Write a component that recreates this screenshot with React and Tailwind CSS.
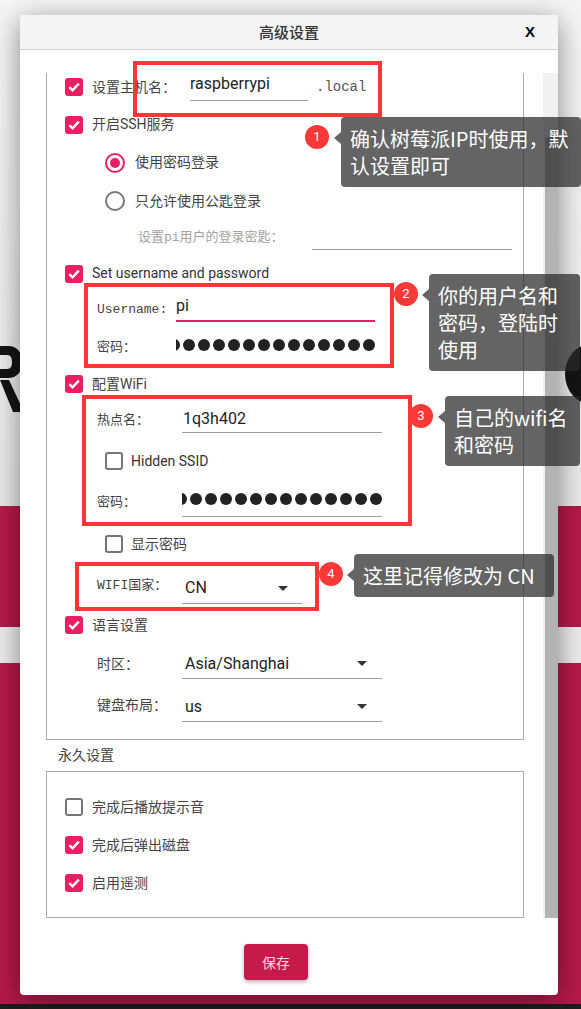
import React from "react";

function Check({ checked }) {
  return checked ? (
    <span className="flex h-[18px] w-[18px] shrink-0 items-center justify-center rounded-[3px] bg-[#e91e63]">
      <svg width="14" height="14" viewBox="0 0 14 14">
        <path d="M2.3 7.2 L5.6 10.4 L11.8 3.6" fill="none" stroke="white" strokeWidth="2.4" />
      </svg>
    </span>
  ) : (
    <span className="h-[18px] w-[18px] shrink-0 rounded-[3px] border-2 border-[#767676] bg-white" />
  );
}

function Radio({ checked }) {
  return checked ? (
    <span className="flex h-[20px] w-[20px] shrink-0 items-center justify-center rounded-full border-2 border-[#e91e63]">
      <span className="h-[10px] w-[10px] rounded-full bg-[#e91e63]" />
    </span>
  ) : (
    <span className="h-[20px] w-[20px] shrink-0 rounded-full border-2 border-[#767676]" />
  );
}

function Dots() {
  return (
    <div className="flex items-center justify-end gap-[3px] overflow-hidden">
      {Array.from({ length: 14 }).map((_, i) => (
        <span key={i} className="h-[12px] w-[12px] shrink-0 rounded-full bg-[#222]" />
      ))}
    </div>
  );
}

function Arrow() {
  return <span className="h-0 w-0 border-x-[5px] border-t-[5px] border-x-transparent border-t-[#333]" />;
}

const sans = "font-['Roboto','Noto_Sans_CJK_SC',sans-serif] text-[14px] text-[#444]";
const mono = "font-['Liberation_Mono','Noto_Sans_CJK_SC',monospace] text-[13px] text-[#444]";

function Tip({ cls, children }) {
  return (
    <div
      className={`absolute whitespace-nowrap rounded-[4px] bg-[rgba(40,40,40,0.72)] px-[9px] py-[8px] font-['Noto_Sans_CJK_SC',sans-serif] text-[20px] leading-[27px] text-white ${cls}`}
    >
      <span className="absolute left-[-7px] top-[15px] h-0 w-0 border-y-[6px] border-r-[7px] border-y-transparent border-r-[rgba(40,40,40,0.72)]" />
      {children}
    </div>
  );
}

function Badge({ cls, n }) {
  return (
    <div
      className={`absolute flex h-[24px] w-[24px] items-center justify-center rounded-full bg-[#f93838] font-['Roboto',sans-serif] text-[13px] text-white ${cls}`}
    >
      {n}
    </div>
  );
}

export default function App() {
  return (
    <div className="relative h-[1009px] w-[581px] overflow-hidden font-['Roboto','Noto_Sans_CJK_SC',sans-serif]">
      {/* background app (dimmed) */}
      <div className="relative h-[506px] bg-linear-to-b from-[#f5f5f5] to-[#e9e9e9]">
        <svg className="absolute left-0 top-[340px]" width="30" height="80" viewBox="0 0 30 80">
          <path
            d="M0 6 H8 C17 6 22 12 22 22 C22 32 17 38 8 38 H0 V29 H7 C11 29 12 26 12 22 C12 18 11 15 7 15 H0 Z"
            fill="#141414"
          />
          <path d="M0 40 H9 L24 72 H13 Z" fill="#141414" />
        </svg>
        <svg className="absolute right-0 top-[340px]" width="30" height="80" viewBox="0 0 30 80">
          <ellipse cx="40" cy="34" rx="26" ry="30" fill="#141414" />
        </svg>
      </div>
      <div className="h-[121px] bg-[#b5194a]" />
      <div className="h-[36px] bg-[#ececec]" />
      <div className="h-[341px] bg-[#b5194a]" />
      <div className="h-[5px] bg-[#1e1e1e]" />

      {/* dialog */}
      <div className="absolute left-[20px] top-[15px] flex h-[980px] w-[538px] flex-col rounded-b-[4px] bg-white shadow-[0_6px_28px_rgba(0,0,0,0.45)]">
        <div className="grid h-[35px] shrink-0 grid-cols-[1fr_auto_1fr] items-center border-b border-[#cfcfcf] bg-[#f5f5f5]">
          <span />
          <span className="font-['Noto_Sans_CJK_SC',sans-serif] text-[15px] font-medium text-[#333]">高级设置</span>
          <span className="justify-self-end pr-[23px] font-['Liberation_Sans',sans-serif] text-[15px] font-bold text-black">X</span>
        </div>

        <div className="pl-[26px] pt-[23px]">
          <div className="flex h-[845px] overflow-hidden">
            <div className="w-[478px] shrink-0 overflow-hidden">
              <div className="mt-[-5px]">
                {/* fieldset 1 */}
                <div className="border-x border-b border-[#ababab] pb-[13px] pl-[18px]">
                  <div className="flex h-[38px] items-center">
                    <Check checked />
                    <span className={`ml-[9px] w-[98px] ${sans}`}>设置主机名：</span>
                    <div className="flex h-[28px] w-[118px] items-center border-b border-[#9e9e9e] pb-[6px] text-[16px] text-[#222]">
                      raspberrypi
                    </div>
                    <span className={`ml-[8px] ${mono} text-[14px] text-[#555]`}>.local</span>
                  </div>
                  <div className="flex h-[37px] items-center">
                    <Check checked />
                    <span className={`ml-[9px] ${sans}`}>开启SSH服务</span>
                  </div>
                  <div className="ml-[40px] flex h-[39px] items-center">
                    <Radio checked />
                    <span className={`ml-[10px] ${sans}`}>使用密码登录</span>
                  </div>
                  <div className="ml-[40px] flex h-[38px] items-center">
                    <Radio />
                    <span className={`ml-[10px] ${sans}`}>只允许使用公匙登录</span>
                  </div>
                  <div className="ml-[73px] flex h-[36px] items-center">
                    <span className={`w-[174px] ${mono} text-[#a3a3a3]`}>设置pi用户的登录密匙：</span>
                    <div className="h-[24px] w-[200px] border-b border-[#9e9e9e]" />
                  </div>
                  <div className="flex h-[35px] items-center">
                    <Check checked />
                    <span className="ml-[9px] text-[14px] text-[#333]">Set username and password</span>
                  </div>
                  <div className="ml-[32px] flex h-[38px] items-center">
                    <span className={`w-[79px] ${mono}`}>Username:</span>
                    <div className="flex h-[24px] w-[199px] items-center border-b-2 border-[#e91e63] pb-[6px] text-[16px] text-[#222]">
                      pi
                    </div>
                  </div>
                  <div className="ml-[32px] flex h-[37px] items-center">
                    <span className={`w-[79px] ${mono}`}>密码：</span>
                    <div className="flex h-[32px] w-[199px] flex-col justify-center pb-[6px]">
                      <Dots />
                    </div>
                  </div>
                  <div className="flex h-[36px] items-center">
                    <Check checked />
                    <span className={`ml-[9px] ${sans}`}>配置WiFi</span>
                  </div>
                  <div className="ml-[32px] flex h-[38px] items-center">
                    <span className={`w-[85px] ${mono}`}>热点名：</span>
                    <div className="flex h-[24px] w-[200px] items-center border-b border-[#9e9e9e] pb-[4px] pl-[1px] text-[16px] text-[#222]">
                      1q3h402
                    </div>
                  </div>
                  <div className="ml-[40px] flex h-[42px] items-center">
                    <Check />
                    <span className="ml-[8px] text-[14px] text-[#333]">Hidden SSID</span>
                  </div>
                  <div className="ml-[32px] flex h-[41px] items-center">
                    <span className={`w-[85px] ${mono}`}>密码：</span>
                    <div className="flex h-[28px] w-[200px] flex-col justify-center border-b border-[#9e9e9e] pb-[6px]">
                      <Dots />
                    </div>
                  </div>
                  <div className="ml-[40px] flex h-[42px] items-center">
                    <Check />
                    <span className={`ml-[8px] ${sans}`}>显示密码</span>
                  </div>
                  <div className="ml-[32px] flex h-[41px] items-center">
                    <span className={`w-[85px] ${mono}`}>WIFI国家：</span>
                    <div className="mt-[6px] flex h-[30px] w-[120px] items-center justify-between border-b border-[#9e9e9e] pl-[3px] pr-[14px] text-[16px] text-[#222]">
                      <span>CN</span>
                      <Arrow />
                    </div>
                  </div>
                  <div className="flex h-[38px] items-center">
                    <Check checked />
                    <span className={`ml-[9px] ${sans}`}>语言设置</span>
                  </div>
                  <div className="ml-[32px] flex h-[40px] items-center">
                    <span className={`w-[85px] ${sans}`}>时区：</span>
                    <div className="flex h-[30px] w-[200px] items-center justify-between border-b border-[#9e9e9e] pl-[3px] pr-[15px] text-[16px] text-[#222]">
                      <span>Asia/Shanghai</span>
                      <Arrow />
                    </div>
                  </div>
                  <div className="ml-[32px] flex h-[42px] items-center">
                    <span className={`w-[85px] ${sans}`}>键盘布局：</span>
                    <div className="mt-[4px] flex h-[30px] w-[200px] items-center justify-between border-b border-[#9e9e9e] pl-[3px] pr-[15px] text-[16px] text-[#222]">
                      <span>us</span>
                      <Arrow />
                    </div>
                  </div>
                </div>

                <div className={`flex h-[31px] items-center pl-[12px] ${sans}`}>永久设置</div>

                {/* fieldset 2 */}
                <div className="border border-[#ababab] pb-[15px] pl-[18px] pt-[16px]">
                  <div className="flex h-[38px] items-center">
                    <Check />
                    <span className={`ml-[9px] ${sans}`}>完成后播放提示音</span>
                  </div>
                  <div className="flex h-[38px] items-center">
                    <Check checked />
                    <span className={`ml-[9px] ${sans}`}>完成后弹出磁盘</span>
                  </div>
                  <div className="flex h-[38px] items-center">
                    <Check checked />
                    <span className={`ml-[9px] ${sans}`}>启用遥测</span>
                  </div>
                </div>
              </div>
            </div>
            <div className="w-[19px] shrink-0" />
            <div className="flex w-[15px] shrink-0 flex-col bg-[#f1f1f1]">
              <div className="ml-[2px] mt-[64px] flex-1 bg-[#b3b3b3]" />
            </div>
          </div>
        </div>

        <div className="flex pl-[224px] pt-[26px]">
          <button className="flex h-[36px] w-[64px] items-center justify-center rounded-[4px] bg-[#c51a4a] font-['Noto_Sans_CJK_SC',sans-serif] text-[14px] text-[#f6dce4] shadow-[0_2px_4px_rgba(0,0,0,0.3)]">
            保存
          </button>
        </div>
      </div>

      {/* annotations */}
      <div className="absolute left-[133px] top-[61px] h-[56px] w-[249px] border-4 border-[#fb3636]" />
      <div className="absolute left-[84px] top-[283px] h-[85px] w-[310px] border-4 border-[#fb3636]" />
      <div className="absolute left-[82px] top-[395px] h-[131px] w-[330px] border-4 border-[#fb3636]" />
      <div className="absolute left-[75px] top-[562px] h-[49px] w-[244px] border-4 border-[#fb3636]" />

      <Badge cls="left-[305px] top-[125px]" n="1" />
      <Badge cls="left-[394px] top-[282px]" n="2" />
      <Badge cls="left-[409px] top-[404px]" n="3" />
      <Badge cls="left-[319px] top-[562px]" n="4" />

      <Tip cls="left-[341px] top-[117px] w-[240px]">
        确认树莓派IP时使用，默
        <br />
        认设置即可
      </Tip>
      <Tip cls="left-[429px] top-[274px] w-[151px]">
        你的用户名和
        <br />
        密码，登陆时
        <br />
        使用
      </Tip>
      <Tip cls="left-[445px] top-[396px] w-[135px]">
        自己的wifi名
        <br />
        和密码
      </Tip>
      <Tip cls="left-[354px] top-[554px] w-[200px]">这里记得修改为 CN</Tip>
    </div>
  );
}
